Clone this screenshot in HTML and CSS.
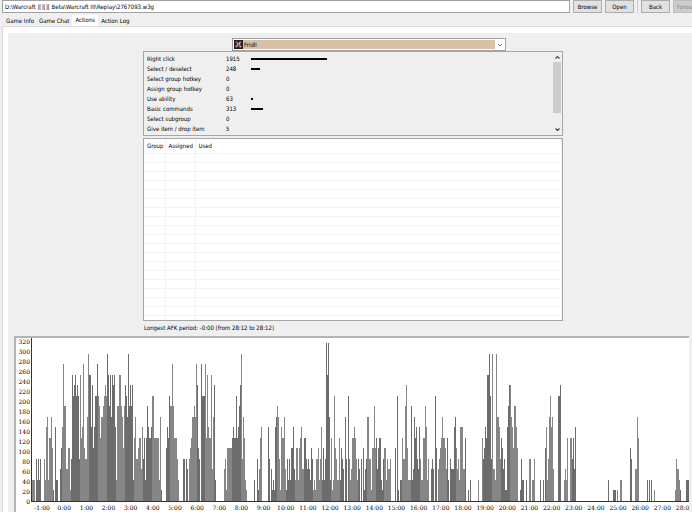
FILE: index.html
```html
<!DOCTYPE html>
<html lang="en">

<head>
  <meta charset="UTF-8">
  <meta name="viewport" content="width=device-width, initial-scale=1.0">
  <title>Replay viewer</title>
  <link rel="stylesheet" href="styles.css">
</head>

<body>
  <div class="toolbar">
    <input type="text" class="path-input" aria-label="Replay file" value="D:\Warcraft ][][][ Beta\Warcraft III\Replay\2767093.w3g">
    <button type="button" class="btn">Browse</button>
    <button type="button" class="btn">Open</button>
    <span class="separator"></span>
    <button type="button" class="btn">Back</button>
    <button type="button" class="btn" disabled>Forward</button>
  </div>

  <nav class="tabs">
    <button type="button" class="tab">Game Info</button>
    <button type="button" class="tab">Game Chat</button>
    <button type="button" class="tab active">Actions</button>
    <button type="button" class="tab">Action Log</button>
  </nav>

  <main class="pane">
    <div class="content">
      <div class="details">
        <div class="player">
          <svg class="player-icon" viewBox="0 0 9 9" aria-hidden="true">
            <rect width="9" height="9" fill="#2b1a1e" />
            <path d="M1 2l2-1 1 2 2-2 2 1-2 2 2 3-2 1-2-2-2 2-1-2 2-2z" fill="#8c6468" />
            <path d="M3 3l1 1M6 2L5 5M2 7l2-2M6 6l1 1" stroke="#e3cdc8" stroke-width=".8" />
          </svg>
          <select class="player-select" aria-label="Player">
            <option>Fridll</option>
          </select>
          <svg class="player-arrow" viewBox="0 0 10 11" aria-hidden="true">
            <path d="M3 5l2 2 2-2" fill="none" stroke="#777" />
          </svg>
        </div>

        <div class="stats">
          <table class="stats-table">
            <tbody id="statsBody"></tbody>
          </table>
          <div class="scrollbar">
            <svg viewBox="0 0 9 9" aria-hidden="true"><path d="M2.5 5.5l2-2 2 2" fill="none" stroke="#444" stroke-width="1.2" /></svg>
            <div class="thumb"></div>
            <svg viewBox="0 0 9 9" aria-hidden="true"><path d="M2.5 3.5l2 2 2-2" fill="none" stroke="#444" stroke-width="1.2" /></svg>
          </div>
        </div>

        <div class="groups">
          <table class="groups-table">
            <thead>
              <tr><th class="col-group">Group</th><th class="col-assigned">Assigned</th><th>Used</th></tr>
            </thead>
            <tbody id="groupsBody"></tbody>
          </table>
        </div>

        <p class="afk">Longest AFK period: -0:00 (from 28:12 to 28:12)</p>
      </div>

      <div class="chart">
        <div class="y-axis" id="yAxis"></div>
        <svg class="plot" id="plot" viewBox="0 0 658 164" preserveAspectRatio="none" shape-rendering="crispEdges"></svg>
        <div class="x-clip">
          <div class="x-axis" id="xAxis"></div>
        </div>
      </div>
    </div>
  </main>

  <script src="script.js"></script>
</body>

</html>
```

FILE: styles.css
```css
* {
  box-sizing: border-box;
}

body {
  margin: 0;
  background: #efefef;
  color: #000;
  font-family: "DejaVu Sans Condensed", "DejaVu Sans", sans-serif;
  font-size: 6px;
  line-height: 10px;
  overflow: hidden;
}

button,
input,
select {
  font: inherit;
  color: inherit;
}

.toolbar {
  display: flex;
  gap: 3px;
  height: 13px;
  padding-left: 2px;
  margin-right: -10px;
}

.path-input {
  flex: 1;
  min-width: 0;
  padding: 0 2px;
  background: white;
  border: 1px solid #a0a0a0;
}

.btn {
  flex: none;
  width: 29px;
  padding: 0;
  background: #e1e1e1;
  border: 1px solid #adadad;
}

.btn:disabled {
  background: #cccccc;
  border-color: #bfbfbf;
  color: #8c8c8c;
}

.separator {
  width: 1px;
  background: #cfcfcf;
}

.tabs {
  display: flex;
  gap: 1px;
  height: 13px;
  padding: 2px 0 0 4px;
}

.tab {
  padding: 1px 2px 0;
  background: none;
  border: 0;
}

.tab.active {
  padding: 0 3px 1px;
  background: white;
}

.pane {
  margin-left: 2px;
  padding: 6px 0 0 5px;
  background: white;
  border: 1px solid #dcdcdc;
  border-right: 0;
}

.content {
  padding: 5px 3px 0 6px;
  background: #efefef;
}

.details {
  width: 423px;
  margin: 0 auto;
  padding-left: 3px;
}

.player {
  position: relative;
  width: 274px;
  height: 13px;
  margin-left: 89px;
}

.player-select {
  display: block;
  width: 100%;
  height: 13px;
  padding: 0 11px;
  appearance: none;
  background: #d9c1a8;
  border: 1px solid #a0a0a0;
  border-radius: 0;
  box-shadow: inset 0 0 0 1px white;
}

.player-icon {
  position: absolute;
  top: 2px;
  left: 2px;
  width: 9px;
  height: 9px;
}

.player-arrow {
  position: absolute;
  top: 1px;
  right: 1px;
  width: 10px;
  height: 11px;
  background: white;
}

.stats {
  display: flex;
  height: 85px;
  padding: 1px 0 1px 1px;
  border: 1px solid #a5a5a5;
}

.stats-table {
  flex: 1;
  align-self: flex-start;
  margin-top: 1px;
  border-collapse: collapse;
  table-layout: fixed;
}

.stats-table th,
.stats-table td {
  height: 10px;
  padding: 0;
  font-weight: normal;
  text-align: left;
}

.stats-table th {
  width: 81px;
  padding-left: 2px;
}

.stats-table .count {
  width: 25px;
}

.bar {
  height: 2px;
  background: black;
}

.scrollbar {
  display: flex;
  flex-direction: column;
  width: 9px;
}

.scrollbar svg {
  width: 9px;
  height: 9px;
}

.thumb {
  width: 8px;
  height: 51px;
  margin-bottom: auto;
  background: #cdcdcd;
}

.groups {
  height: 183px;
  margin-top: 2px;
  overflow: hidden;
  background: white;
  border: 1px solid #a5a5a5;
}

.groups-table {
  width: 100%;
  border-collapse: collapse;
  table-layout: fixed;
}

.groups-table th,
.groups-table td {
  height: 9px;
  padding: 0 3px;
  border-right: 1px solid #f3f3f3;
  border-bottom: 1px solid #f3f3f3;
  font-weight: normal;
  line-height: 8px;
  text-align: left;
}

.groups-table th {
  height: 14px;
}

.groups-table .col-group {
  width: 21px;
}

.groups-table .col-assigned {
  width: 30px;
}

.afk {
  margin: 2px 0 3px 1px;
}

.chart {
  display: grid;
  grid-template-columns: 15px 1fr;
  background: white;
  border-top: 2px solid #b4b4b4;
  border-left: 2px solid #b4b4b4;
  font-family: "DejaVu Serif", serif;
}

.y-axis {
  display: flex;
  flex-direction: column;
  height: 164px;
  margin-top: -1px;
  padding-right: 1px;
  text-align: right;
}

.plot {
  display: block;
  width: 100%;
  height: 164px;
}

.x-clip {
  grid-column: 2;
  overflow: hidden;
}

/* one column per minute, the last one runs past the plot */
.x-axis {
  display: grid;
  grid-auto-flow: column;
  grid-auto-columns: 1fr;
  width: 101%;
  padding-top: 1px;
  text-align: center;
}
```

FILE: script.js
```js
const stats = [
  ['Right click', 1915],
  ['Select / deselect', 248],
  ['Select group hotkey', 0],
  ['Assign group hotkey', 0],
  ['Use ability', 63],
  ['Basic commands', 313],
  ['Select subgroup', 0],
  ['Give item / drop item', 5]
];

// start sample -> one hex digit per sample, each step is 21 actions per minute
const samples = {
  0: '22220424240004278266851072200357d9933551',
  40: '4cabcaba4c67d5448ecc7b57aada96889abaec9c',
  80: '8cbc7299cc9859ba8e9b9b268445663746269766',
  120: '7aa666662810000576a99d966642000044043045',
  160: '68898db540daaad6c766c38b2000000003415555',
  200: '56766a679be48621000000020041367000000740',
  240: '3121789841766831424255732552567336643432',
  280: '541214452472524fcf82612a5422625430840a42',
  320: '3667642430405134884415595635662145524334',
  360: '000050a10226449b522292386743742266972400',
  400: '3430a50345686653620433378534277733600102',
  440: '0000000200064576ccea4e332e887465341179bb',
  480: '875997500142200200440224000002002057248a',
  520: '7830000aab00023260066463700000',
  577: '2',
  582: '111010022',
  599: '540003386',
  616: '20202001',
  644: '14332100000222'
};

function renderStats() {
  document.getElementById('statsBody').innerHTML = stats.map(([name, count]) => {
    const width = Math.floor(count / 25);
    return `<tr><th scope="row">${name}</th><td class="count">${count}</td><td><div class="bar" style="width: ${width}px"></div></td></tr>`;
  }).join('');
}

function renderGroups() {
  document.getElementById('groupsBody').innerHTML = '<tr><td></td><td></td><td></td></tr>'.repeat(19);
}

function renderChart() {
  let bars = '';
  for (const [start, levels] of Object.entries(samples)) {
    [...levels].forEach((level, i) => {
      const x = Number(start) + i;
      const height = Math.round(parseInt(level, 16) * 10.5);
      // lighter bands repeat along the time axis
      const color = (x + 5) % 17.9 < 9 ? '#868686' : '#6c6c6c';
      bars += `<rect x="${x}" y="${163 - height}" width="1" height="${height}" fill="${color}"/>`;
    });
  }
  bars += '<path d="M0.5 0V163.5H658" fill="none" stroke="#333"/>';
  document.getElementById('plot').innerHTML = bars;

  let yLabels = '';
  for (let value = 320; value >= 0; value -= 20) {
    yLabels += `<span>${value}</span>`;
  }
  document.getElementById('yAxis').innerHTML = yLabels;

  let xLabels = '';
  for (let minute = -1; minute <= 28; minute++) {
    xLabels += `<span>${minute}:00</span>`;
  }
  document.getElementById('xAxis').innerHTML = xLabels;
}

renderStats();
renderGroups();
renderChart();
```
